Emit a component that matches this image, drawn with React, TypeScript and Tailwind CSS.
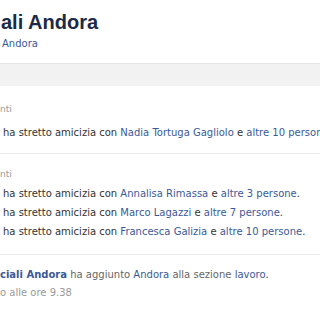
import React from 'react'

const link = 'text-[#3b5998]'

function Row({ children }: { children: React.ReactNode }) {
  return <div className="h-[19px] leading-[19px] whitespace-nowrap text-[#333]">{children}</div>
}

export default function App() {
  return (
    <div className="w-[320px] h-[320px] overflow-hidden bg-white text-[10px]" style={{ fontFamily: '"DejaVu Sans", sans-serif' }}>
      <div className="h-[63px] pl-[1px] pt-[10px]">
        <h1 className="text-[20px] font-bold leading-[24px] text-[#1c2a47] whitespace-nowrap" style={{ fontFamily: '"Liberation Sans", Arial, sans-serif' }}>
          ali Andora
        </h1>
        <div className={`mt-[3px] pl-[1px] leading-[14px] ${link}`}>Andora</div>
      </div>
      <div className="h-[23px] border-t border-[#e5e5e5] bg-[#f2f2f2]"></div>

      <div className="pt-[17px] pb-[11px] border-b border-[#e9e9e9]">
        <div className="h-[13px] leading-[13px] text-[9px] text-[#999]">nti</div>
        <div className="pl-[3px] mt-[7px]">
          <Row>
            ha stretto amicizia con <span className={link}>Nadia Tortuga Gagliolo</span> e <span className={link}>altre 10 persone</span>.
          </Row>
        </div>
      </div>

      <div className="pt-[14px] pb-[13px] border-b border-[#e9e9e9]">
        <div className="h-[13px] leading-[13px] text-[9px] text-[#999]">nti</div>
        <div className="pl-[3px] mt-[3px]">
          <Row>
            ha stretto amicizia con <span className={link}>Annalisa Rimassa</span> e <span className={link}>altre 3 persone</span>.
          </Row>
          <Row>
            ha stretto amicizia con <span className={link}>Marco Lagazzi</span> e <span className={link}>altre 7 persone</span>.
          </Row>
          <Row>
            ha stretto amicizia con <span className={link}>Francesca Galizia</span> e <span className={link}>altre 10 persone</span>.
          </Row>
        </div>
      </div>

      <div className="pt-[10px]">
        <Row>
          <span className={`${link} font-bold`}>ciali Andora</span> <span className="text-[#666]">ha aggiunto</span> <span className={link}>Andora</span> <span className="text-[#666]">alla sezione</span> <span className={link}>lavoro</span>.
        </Row>
        <div className="h-[18px] leading-[18px] text-[#999]">o alle ore 9.38</div>
      </div>
    </div>
  )
}
